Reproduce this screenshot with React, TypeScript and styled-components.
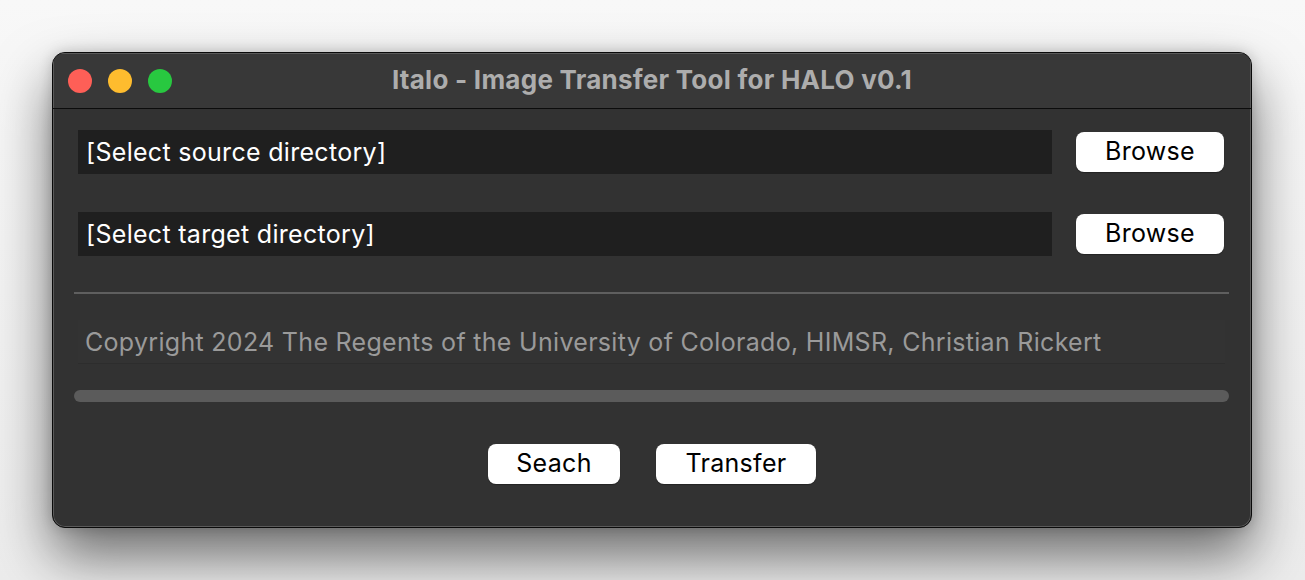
import React from "react";
import styled, { createGlobalStyle } from "styled-components";

const Global = createGlobalStyle`
  html, body { margin: 0; padding: 0; }
  body {
    background: linear-gradient(#f8f8f8, #ececec);
    width: 1305px;
    height: 580px;
    overflow: hidden;
    font-family: Inter, "Liberation Sans", sans-serif;
  }
`;

const Stage = styled.div`
  padding: 52px 0 0 52px;
`;

const Window = styled.div`
  width: 1200px;
  height: 476px;
  box-sizing: border-box;
  border: 1px solid #0a0a0a;
  border-radius: 13px;
  background: #323232;
  overflow: hidden;
  display: flex;
  flex-direction: column;
  box-shadow: inset 0 0 0 1px #5a5a5a, 0 28px 55px rgba(0, 0, 0, 0.55),
    0 0 14px rgba(0, 0, 0, 0.18);
`;

const TitleBar = styled.div`
  height: 55px;
  flex: none;
  background: #383838;
  border-bottom: 1px solid #0c0c0c;
  display: grid;
  grid-template-columns: 1fr auto 1fr;
  align-items: center;
  padding: 0 15px;
  box-shadow: inset 0 1px 0 #5a5a5a, inset 1px 0 0 #5a5a5a, inset -1px 0 0 #5a5a5a;
`;

const Lights = styled.div`
  display: flex;
  gap: 16px;
  margin-top: 1px;
`;

const Light = styled.span<{ $c: string }>`
  width: 24px;
  height: 24px;
  border-radius: 50%;
  background: ${(p) => p.$c};
`;

const Title = styled.div`
  font-size: 26px;
  font-weight: 700;
  color: #adadad;
  letter-spacing: 0.25px;
  white-space: nowrap;
  margin-top: -3px;
`;

const Body = styled.div`
  flex: 1;
  display: flex;
  flex-direction: column;
  padding: 21px 27px 0 21px;
`;

const PathRow = styled.div<{ $mt?: number }>`
  display: flex;
  align-items: center;
  gap: 24px;
  margin-top: ${(p) => p.$mt ?? 0}px;
  padding-left: 4px;
`;

const PathField = styled.div`
  flex: 1;
  height: 44px;
  background: #1f1f1f;
  color: #ffffff;
  font-size: 25px;
  letter-spacing: 0.3px;
  display: flex;
  align-items: center;
  padding-left: 8px;
  box-sizing: border-box;
`;

const Button = styled.button<{ $w: number }>`
  width: ${(p) => p.$w}px;
  height: 40px;
  border: none;
  border-radius: 8px;
  background: #ffffff;
  color: #000;
  font-family: Inter, "Liberation Sans", sans-serif;
  font-size: 25px;
  letter-spacing: 0.3px;
  padding: 0;
  padding-bottom: 2px;
  box-shadow: 0 1px 1px rgba(0, 0, 0, 0.3);
`;

const Divider = styled.hr`
  margin: 36px 0 0 0;
  border: none;
  height: 2px;
  background: #5f5f5f;
  width: 1155px;
`;

const Copyright = styled.div`
  margin: 26px 0 0 4px;
  height: 44px;
  box-sizing: border-box;
  padding-left: 7px;
  display: flex;
  align-items: center;
  font-size: 25px;
  letter-spacing: 0.3px;
  color: #9a9a9a;
  background: #333333;
  border-bottom: 1px solid #2d2d2d;
  width: 1147px;
  white-space: nowrap;
`;

const Progress = styled.div`
  margin-top: 26px;
  height: 12px;
  width: 1155px;
  border-radius: 6px;
  background: #5b5b5b;
`;

const Actions = styled.div`
  margin-top: 42px;
  display: flex;
  justify-content: center;
  gap: 36px;
  padding-left: 6px;
`;

export default function App() {
  return (
    <>
      <Global />
      <Stage>
        <Window>
          <TitleBar>
            <Lights>
              <Light $c="#fe5f57" />
              <Light $c="#febc2e" />
              <Light $c="#28c840" />
            </Lights>
            <Title>Italo - Image Transfer Tool for HALO v0.1</Title>
            <div />
          </TitleBar>
          <Body>
            <PathRow>
              <PathField>[Select source directory]</PathField>
              <Button $w={148}>Browse</Button>
            </PathRow>
            <PathRow $mt={38}>
              <PathField>[Select target directory]</PathField>
              <Button $w={148}>Browse</Button>
            </PathRow>
            <Divider />
            <Copyright>
              Copyright 2024 The Regents of the University of Colorado, HIMSR, Christian Rickert
            </Copyright>
            <Progress />
            <Actions>
              <Button $w={132}>Seach</Button>
              <Button $w={160}>Transfer</Button>
            </Actions>
          </Body>
        </Window>
      </Stage>
    </>
  );
}
